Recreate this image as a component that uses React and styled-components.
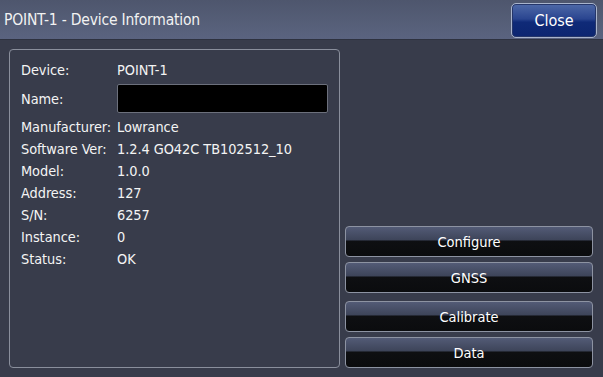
import React from "react";
import styled, { createGlobalStyle } from "styled-components";

const GlobalStyle = createGlobalStyle`
  html, body {
    margin: 0;
    padding: 0;
    background: #383c4b;
  }
  body {
    font-family: "DejaVu Sans Condensed", "DejaVu Sans", sans-serif;
    color: #fff;
  }
`;

const Screen = styled.div`
  width: 603px;
  height: 377px;
  display: flex;
  flex-direction: column;
  background: #383c4b;
  overflow: hidden;
`;

const Header = styled.div`
  height: 40px;
  flex: 0 0 auto;
  display: flex;
  align-items: center;
  justify-content: space-between;
  padding: 0 6px 0 4px;
  box-sizing: border-box;
  background: linear-gradient(#4e566d, #57607a 70%, #5a6380);
  border-bottom: 1px solid #2e3240;
`;

const Title = styled.div`
  font-size: 15.5px;
  color: #f2f2f2;
  letter-spacing: -0.2px;
`;

const CloseButton = styled.button`
  width: 86px;
  height: 35px;
  margin-top: 1px;
  border: 1px solid #a9b4cc;
  border-radius: 5px;
  background: linear-gradient(#4f6aa8 0%, #2a4590 45%, #0f2a78 55%, #0c2570 100%);
  color: #fff;
  font-family: inherit;
  font-size: 16px;
  box-shadow: inset 0 0 0 1px #25366a;
`;

const Body = styled.div`
  flex: 1;
  display: flex;
  gap: 5px;
  padding: 9px;
  box-sizing: border-box;
`;

const Panel = styled.div`
  width: 331px;
  box-sizing: border-box;
  border: 1px solid #8a8f9c;
  border-radius: 4px;
  padding: 9px 11px;
  display: flex;
  flex-direction: column;
`;

const Row = styled.div`
  display: flex;
  align-items: center;
  height: ${(p) => p.$h || 22}px;
  font-size: 14.4px;
  color: #f4f4f4;
  letter-spacing: -0.05px;
`;

const Label = styled.span`
  width: 96px;
  flex: 0 0 auto;
  white-space: nowrap;
`;

const Value = styled.span`
  white-space: nowrap;
`;

const NameBox = styled.div`
  width: 211px;
  height: 29px;
  box-sizing: border-box;
  background: #000;
  border: 1px solid #6c707c;
  border-radius: 2px;
`;

const Side = styled.div`
  flex: 1;
  display: flex;
  flex-direction: column;
  justify-content: flex-end;
  padding-right: 1px;
`;

const ActionButton = styled.button`
  height: 31px;
  margin-top: ${(p) => p.$gap}px;
  box-sizing: border-box;
  border: 1px solid #8d93a2;
  border-radius: 4px;
  background: linear-gradient(#535b76 0%, #3d4459 45%, #0e0f12 48%, #0b0c0e 100%);
  color: #fff;
  font-family: inherit;
  font-size: 14.5px;
  padding: 0;
`;

const INFO = [
  ["Device:", "POINT-1"],
  ["Name:", null],
  ["Manufacturer:", "Lowrance"],
  ["Software Ver:", "1.2.4 GO42C TB102512_10"],
  ["Model:", "1.0.0"],
  ["Address:", "127"],
  ["S/N:", "6257"],
  ["Instance:", "0"],
  ["Status:", "OK"],
];

const ACTIONS = [
  ["Configure", 0],
  ["GNSS", 5],
  ["Calibrate", 8],
  ["Data", 5],
];

export default function App() {
  return (
    <Screen>
      <GlobalStyle />
      <Header>
        <Title>POINT-1 - Device Information</Title>
        <CloseButton>Close</CloseButton>
      </Header>
      <Body>
        <Panel>
          {INFO.map(([label, value]) =>
            value === null ? (
              <Row key={label} $h={35}>
                <Label>{label}</Label>
                <NameBox />
              </Row>
            ) : (
              <Row key={label}>
                <Label>{label}</Label>
                <Value>{value}</Value>
              </Row>
            )
          )}
        </Panel>
        <Side>
          {ACTIONS.map(([text, gap]) => (
            <ActionButton key={text} $gap={gap}>
              {text}
            </ActionButton>
          ))}
        </Side>
      </Body>
    </Screen>
  );
}
